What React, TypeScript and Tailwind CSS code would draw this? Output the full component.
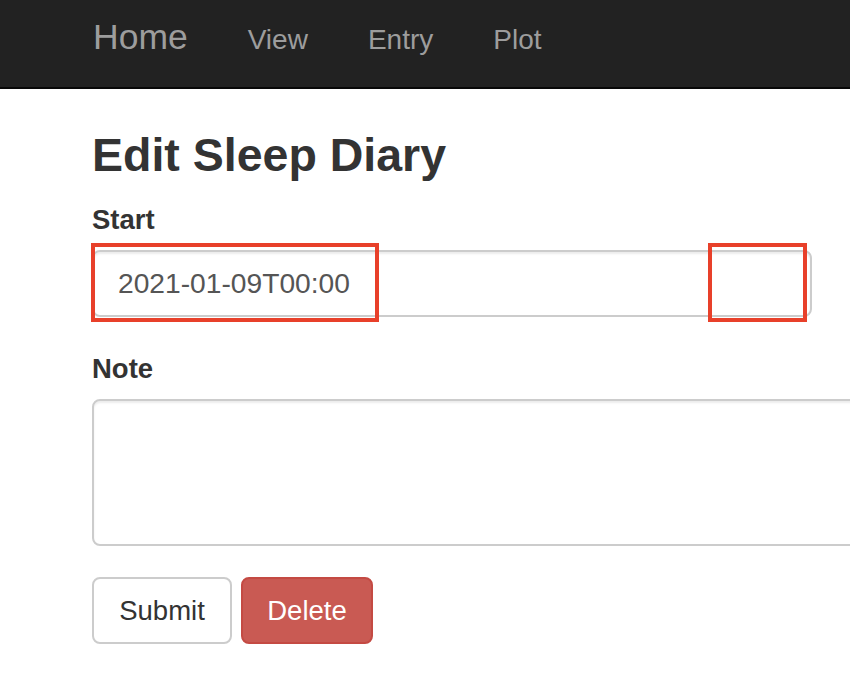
import React from "react";

const font = { fontFamily: '"Liberation Sans", Arial, Helvetica, sans-serif' };

function Navbar() {
  const links = ["View", "Entry", "Plot"];
  return (
    <nav className="h-[89px] bg-[#222222] border-b-2 border-[#080808]">
      <div className="flex items-baseline pl-[63px] pt-[20px]">
        <a className="px-[30px] text-[35.5px] leading-[35px] text-[#9d9d9d]">Home</a>
        {links.map((l) => (
          <a key={l} className="px-[30px] text-[28px] leading-[35px] text-[#9d9d9d]">
            {l}
          </a>
        ))}
      </div>
    </nav>
  );
}

export default function App() {
  const [start, setStart] = React.useState("2021-01-09T00:00");
  const [note, setNote] = React.useState("");

  return (
    <div className="min-h-[678px] w-[850px] overflow-hidden bg-white text-[#333333]" style={font}>
      <Navbar />
      <div className="pl-[92px]">
        <h3 className="mt-[41px] mb-[19px] text-[46.5px] leading-[1.1] font-bold">Edit Sleep Diary</h3>

        <div className="mb-[32px]">
          <label className="block mb-[11px] text-[27.5px] leading-[39px] font-bold">Start</label>
          <div className="relative w-[720px]">
            <input
              type="text"
              value={start}
              onChange={(e) => setStart(e.target.value)}
              className="block w-[720px] h-[67px] px-[24px] border-2 border-[#cccccc] rounded-[8px] text-[28.2px] text-[#555555] bg-white outline-none shadow-[inset_0_2px_2px_rgba(0,0,0,0.075)]"
              style={font}
            />
            {/* annotation boxes */}
            <div className="absolute left-[-1px] top-[-7px] w-[288px] h-[79px] border-[4px] border-[#e8402a]" />
            <div className="absolute left-[616px] top-[-7px] w-[99px] h-[79px] border-[4px] border-[#e8402a]" />
          </div>
        </div>

        <div className="mb-[31px]">
          <label className="block mb-[11px] text-[27.5px] leading-[39px] font-bold">Note</label>
          <textarea
            value={note}
            onChange={(e) => setNote(e.target.value)}
            className="block w-[820px] h-[147px] px-[24px] py-[12px] border-2 border-[#cccccc] rounded-[8px] text-[27.5px] text-[#555555] bg-white outline-none resize-none shadow-[inset_0_2px_2px_rgba(0,0,0,0.075)]"
            style={font}
          />
        </div>

        <div className="flex gap-[9px]">
          <button className="w-[140px] h-[67px] border-2 border-[#cccccc] rounded-[8px] bg-white text-[27.5px] text-[#333333]">
            Submit
          </button>
          <button className="w-[132px] h-[67px] border-2 border-[#c44a43] rounded-[8px] bg-[#c95a53] text-[27.5px] text-white">
            Delete
          </button>
        </div>
      </div>
    </div>
  );
}
